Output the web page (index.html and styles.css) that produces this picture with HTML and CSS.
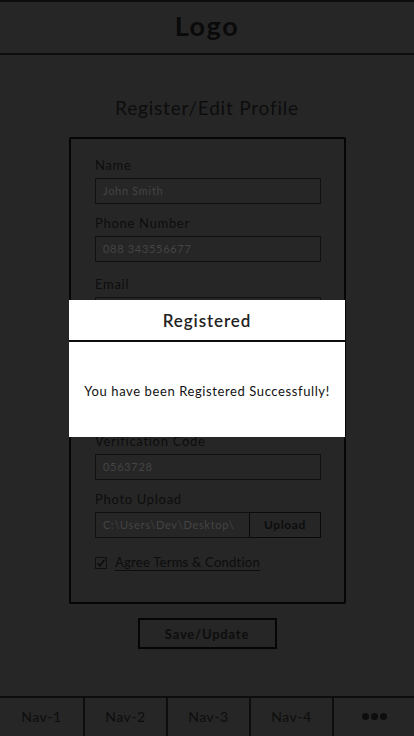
FILE: index.html
```html
<!DOCTYPE html>
<html>
<head>
<meta charset="utf-8">
<link rel="stylesheet" href="styles.css">
</head>
<body>
<div class="app">
  <header class="topbar"><span class="logo">Logo</span></header>
  <main class="main">
    <h1 class="title">Register/Edit Profile</h1>
    <form class="card">
      <div class="field">
        <label class="label">Name</label>
        <div class="input">John Smith</div>
      </div>
      <div class="field">
        <label class="label">Phone Number</label>
        <div class="input">088 343556677</div>
      </div>
      <div class="field field-email">
        <label class="label">Email</label>
        <div class="input"></div>
      </div>
      <div class="field">
        <label class="label"></label>
        <div class="input"></div>
      </div>
      <div class="field field-verify">
        <label class="label">Verification Code</label>
        <div class="input">0563728</div>
      </div>
      <div class="field">
        <label class="label">Photo Upload</label>
        <div class="upload">
          <div class="input upload-path">C:\Users\Dev\Desktop\</div>
          <div class="upload-btn">Upload</div>
        </div>
      </div>
      <div class="agree">
        <span class="checkbox"><svg width="10" height="10" viewBox="0 0 10 10"><path d="M1.5 5.2 L4 7.8 L8.6 1.6" fill="none" stroke="#0d0d0d" stroke-width="1.6"/></svg></span>
        <span class="agree-text">Agree Terms &amp; Condtion</span>
      </div>
    </form>
    <div class="actions"><button class="save" type="button">Save/Update</button></div>
  </main>
  <nav class="nav">
    <div class="nav-item">Nav-1</div>
    <div class="nav-item">Nav-2</div>
    <div class="nav-item">Nav-3</div>
    <div class="nav-item">Nav-4</div>
    <div class="nav-item"><span class="dots"><i></i><i></i><i></i></span></div>
  </nav>
  <div class="modal">
    <div class="modal-head">Registered</div>
    <div class="modal-body">You have been Registered Successfully!</div>
  </div>
</div>
</body>
</html>
```
FILE: styles.css
```css
* { box-sizing: border-box; }
html, body { margin: 0; padding: 0; }
body {
  background: #262626;
  font-family: Lato, "Noto Sans", sans-serif;
  color: #0d0d0d;
}
.app {
  position: relative;
  width: 414px;
  height: 736px;
  display: flex;
  flex-direction: column;
  overflow: hidden;
}
.topbar {
  height: 55px;
  border-top: 2px solid #0d0d0d;
  border-bottom: 2px solid #0d0d0d;
  display: flex;
  align-items: center;
  justify-content: center;
  padding-bottom: 5px;
}
.logo {
  font-size: 27px;
  font-weight: 700;
  letter-spacing: 1.6px;
  color: #0a0a0a;
}
.main {
  flex: 1;
  display: flex;
  flex-direction: column;
  align-items: center;
}
.title {
  margin: 41px 0 0;
  font-size: 19px;
  font-weight: 400;
  line-height: 24px;
  letter-spacing: 0.8px;
  color: #0d0d0d;
}
.card {
  margin: 17px 0 0 1px;
  width: 277px;
  height: 467px;
  border: 2px solid #050505;
  border-radius: 2px;
  padding: 18px 23px 0 24px;
  display: flex;
  flex-direction: column;
}
.field { display: flex; flex-direction: column; }
.field + .field { margin-top: 11px; }
.field-verify { margin-top: 52px !important; }
.label {
  font-size: 13px;
  line-height: 16px;
  height: 16px;
  letter-spacing: 0.7px;
  color: #0d0d0d;
}
.field-email .label { margin-top: 3px; }
.input {
  margin-top: 5px;
  height: 26px;
  border: 1px solid #111;
  font-size: 11px;
  line-height: 24px;
  padding: 0 7px;
  color: #444;
  letter-spacing: 0.7px;
  white-space: nowrap;
  overflow: hidden;
}
.upload { display: flex; margin-top: 5px; }
.upload .input { margin-top: 0; }
.upload-path { width: 154px; border-right: none; }
.upload-btn {
  width: 72px;
  height: 26px;
  border: 1px solid #0a0a0a;
  font-size: 12px;
  font-weight: 700;
  line-height: 24px;
  text-align: center;
  color: #0d0d0d;
  letter-spacing: 0.6px;
}
.agree {
  margin-top: 16px;
  display: flex;
  align-items: center;
  gap: 8px;
}
.checkbox {
  width: 12px;
  height: 12px;
  border: 1px solid #111;
  display: flex;
  align-items: center;
  justify-content: center;
}
.agree-text {
  font-size: 13px;
  line-height: 16px;
  letter-spacing: 0.25px;
  border-bottom: 1px solid #0d0d0d;
}
.actions { margin-top: 14px; display: flex; justify-content: center; }
.save {
  width: 139px;
  height: 31px;
  border: 2px solid #050505;
  background: transparent;
  font-family: Lato, "Noto Sans", sans-serif;
  font-size: 13px;
  font-weight: 700;
  color: #0d0d0d;
  letter-spacing: 0.8px;
  padding: 0;
}
.nav {
  height: 40px;
  border-top: 2px solid #0d0d0d;
  display: grid;
  grid-template-columns: 83px 83px 83px 83px 1fr;
}
.nav-item {
  display: flex;
  align-items: center;
  justify-content: center;
  font-size: 14px;
  letter-spacing: 0.5px;
  color: #0d0d0d;
  padding-bottom: 2px;
}
.nav-item + .nav-item { border-left: 2px solid #0d0d0d; }
.dots { display: flex; gap: 2px; }
.dots i {
  width: 7px;
  height: 7px;
  border-radius: 50%;
  background: #0d0d0d;
}
.modal {
  position: absolute;
  left: 69px;
  top: 300px;
  width: 276px;
  height: 137px;
  background: #fff;
  display: flex;
  flex-direction: column;
}
.modal-head {
  height: 42px;
  border-bottom: 2px solid #0d0d0d;
  display: flex;
  align-items: center;
  justify-content: center;
  font-size: 17px;
  font-weight: 600;
  letter-spacing: 0.9px;
  color: #222;
}
.modal-body {
  flex: 1;
  display: flex;
  align-items: center;
  justify-content: center;
  font-size: 13px;
  letter-spacing: 0.6px;
  color: #111;
  padding-top: 2px;
}
```
